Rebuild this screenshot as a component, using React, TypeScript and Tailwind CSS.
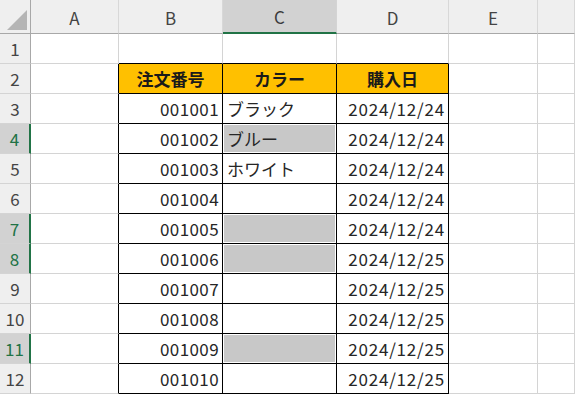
const cols = ["A", "B", "C", "D", "E", ""];

type Row = {
  id: string;
  color: string;
  date: string;
  gray: boolean;
};

const rows: Row[] = [
  { id: "001001", color: "ブラック", date: "2024/12/24", gray: false },
  { id: "001002", color: "ブルー", date: "2024/12/24", gray: true },
  { id: "001003", color: "ホワイト", date: "2024/12/24", gray: false },
  { id: "001004", color: "", date: "2024/12/24", gray: false },
  { id: "001005", color: "", date: "2024/12/24", gray: true },
  { id: "001006", color: "", date: "2024/12/25", gray: true },
  { id: "001007", color: "", date: "2024/12/25", gray: false },
  { id: "001008", color: "", date: "2024/12/25", gray: false },
  { id: "001009", color: "", date: "2024/12/25", gray: true },
  { id: "001010", color: "", date: "2024/12/25", gray: false },
];

// rows 4, 7, 8, 11 are part of the selection
const selectedRows = [4, 7, 8, 11];

function RowHeader({ n }: { n: number }) {
  const selected = selectedRows.includes(n);
  return (
    <div
      className={
        selected
          ? "flex items-center justify-center border-b border-r-2 border-b-[#d4d4d4] border-r-[#217346] bg-[#d2d2d2] text-[#217346]"
          : "flex items-center justify-center border-b border-r border-b-[#d4d4d4] border-r-[#a8a8a8] bg-[#efefef] text-[#444]"
      }
    >
      {n}
    </div>
  );
}

function Blank({ black }: { black?: boolean }) {
  return (
    <div
      className={
        black
          ? "border-b border-r border-b-[#d4d4d4] border-r-black bg-white"
          : "border-b border-r border-[#d4d4d4] bg-white"
      }
    />
  );
}

export default function App() {
  return (
    <div
      className="grid h-[396px] w-[575px] grid-cols-[31px_88px_104px_114px_112px_89px_1fr] grid-rows-[34px_repeat(12,30px)] overflow-hidden bg-white text-[17px] text-[#262626]"
      style={{ fontFamily: '"Noto Sans CJK JP", "Noto Sans", sans-serif' }}
    >
      {/* corner */}
      <div className="relative border-b border-r border-[#a8a8a8] bg-[#efefef]">
        <svg className="absolute bottom-[3px] right-[3px]" width="20" height="20" viewBox="0 0 20 20">
          <polygon points="20,0 20,20 0,20" fill="#b5b5b5" />
        </svg>
      </div>

      {/* column headers */}
      {cols.map((c) =>
        c === "C" ? (
          <div
            key={c}
            className="flex items-center justify-center border-b-2 border-r border-b-[#217346] border-r-[#d4d4d4] bg-[#d2d2d2] pt-[2px] text-[#3b3b3b]"
          >
            {c}
          </div>
        ) : (
          <div
            key={c || "F"}
            className="flex items-center justify-center border-b border-r border-b-[#a8a8a8] border-r-[#d8d8d8] bg-[#efefef] pt-[2px] text-[#444]"
          >
            {c}
          </div>
        )
      )}

      {/* row 1 */}
      <RowHeader n={1} />
      <Blank />
      <div className="border-b border-r border-b-black border-r-[#d4d4d4]" />
      <div className="border-b border-r border-b-black border-r-[#d4d4d4]" />
      <div className="border-b border-r border-b-black border-r-[#d4d4d4]" />
      <Blank />
      <Blank />

      {/* row 2: table header */}
      <RowHeader n={2} />
      <Blank black />
      <div className="flex items-center justify-center border-b border-r border-black bg-[#ffc000] font-bold text-[#1a1a1a]">
        注文番号
      </div>
      <div className="flex items-center justify-center border-b border-r border-black bg-[#ffc000] font-bold text-[#1a1a1a]">
        カラー
      </div>
      <div className="flex items-center justify-center border-b border-r border-black bg-[#ffc000] font-bold text-[#1a1a1a]">
        購入日
      </div>
      <Blank />
      <Blank />

      {rows.map((r, i) => (
        <div key={r.id} className="contents">
          <RowHeader n={i + 3} />
          <Blank black />
          <div className="flex items-center justify-end border-b border-r border-black pr-[3px] tracking-[0.4px]">
            {r.id}
          </div>
          <div className="flex border-b border-r border-black">
            {r.gray ? (
              <div className="m-[1px] flex flex-1 items-center bg-[#c8c8c8] pl-[3px]">
                {r.color}
              </div>
            ) : (
              <div className="flex flex-1 items-center pl-[4px]">{r.color}</div>
            )}
          </div>
          <div className="flex items-center justify-end border-b border-r border-black pr-[3px] tracking-[0.8px]">
            {r.date}
          </div>
          <Blank />
          <Blank />
        </div>
      ))}
    </div>
  );
}
